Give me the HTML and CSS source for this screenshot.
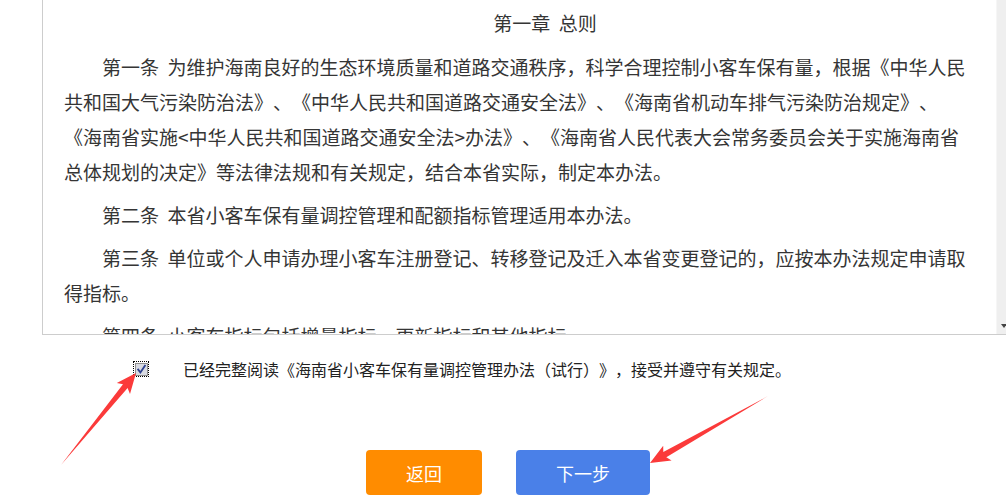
FILE: index.html
```html
<!DOCTYPE html>
<html lang="zh-CN">
<head>
<meta charset="utf-8">
<title>海南省小客车保有量调控管理办法</title>
<link rel="stylesheet" href="styles.css">
</head>
<body>
<div class="page">
  <div class="doc-box">
    <div class="doc-content">
      <p class="title">第一章&nbsp;&nbsp;总则</p>
      <p>第一条&nbsp;&nbsp;为维护海南良好的生态环境质量和道路交通秩序，科学合理控制小客车保有量，根据《中华人民共和国大气污染防治法》、《中华人民共和国道路交通安全法》、《海南省机动车排气污染防治规定》、《海南省实施&lt;中华人民共和国道路交通安全法&gt;办法》、《海南省人民代表大会常务委员会关于实施海南省总体规划的决定》等法律法规和有关规定，结合本省实际，制定本办法。</p>
      <p>第二条&nbsp;&nbsp;本省小客车保有量调控管理和配额指标管理适用本办法。</p>
      <p>第三条&nbsp;&nbsp;单位或个人申请办理小客车注册登记、转移登记及迁入本省变更登记的，应按本办法规定申请取得指标。</p>
      <p>第四条&nbsp;&nbsp;小客车指标包括增量指标、更新指标和其他指标。</p>
    </div>
    <div class="scrollbar"><span class="scroll-arrow"></span></div>
  </div>

  <div class="agree-row">
    <span class="check-focus">
      <span class="check-box">
        <svg width="11" height="11" viewBox="0 0 11 11"><path d="M2.2 5.6 L4.4 8.4 L8.9 1.8" fill="none" stroke="#2b3f8e" stroke-width="1.8" stroke-linecap="square"/></svg>
      </span>
    </span>
    <span class="agree-text">已经完整阅读《海南省小客车保有量调控管理办法（试行）》，接受并遵守有关规定。</span>
  </div>

  <div class="btn-row">
    <button class="btn btn-back">返回</button>
    <button class="btn btn-next">下一步</button>
  </div>

  <svg class="annot" width="1006" height="502" viewBox="0 0 1006 502">
    <polygon points="61,465 127.6,388.1 130,393.9 136,373 116.8,383.1 123,384.3" fill="#fb3a3a"/>
    <polygon points="768,396 666.3,457.2 671.6,460.5 650,463 663.2,445.7 663.3,452" fill="#fb3a3a"/>
  </svg>
</div>
</body>
</html>
```

FILE: styles.css
```css
html, body {
  margin: 0;
  padding: 0;
  background: #ffffff;
}

body {
  width: 1006px;
  height: 502px;
  overflow: hidden;
  font-family: "Noto Sans CJK SC", "Microsoft YaHei", sans-serif;
  color: #333333;
  text-spacing-trim: space-all;
  font-feature-settings: "chws" 0, "halt" 0, "palt" 0;
}

.page {
  position: relative;
  width: 1006px;
  height: 502px;
}

.doc-box {
  margin-left: 42px;
  height: 334px;
  border-left: 1px solid #cdcdcd;
  border-bottom: 1px solid #cdcdcd;
  display: flex;
  overflow: hidden;
}

.doc-content {
  flex: 1;
  padding: 5px 0 0 21px;
  overflow: hidden;
}

.doc-content p {
  width: 906px;
  margin: 0 0 8px 0;
  font-size: 19px;
  line-height: 35px;
  text-indent: 2em;
  color: #353535;
}

.doc-content p.title {
  text-align: center;
  text-indent: 0;
  padding-left: 56px;
  box-sizing: border-box;
  margin-bottom: 9px;
}

.scrollbar {
  width: 10px;
  background: #efefef;
  border-left: 1px solid #f6f6f6;
  display: flex;
  flex-direction: column;
  justify-content: flex-end;
  padding: 0 0 6px 4px;
  box-sizing: border-box;
}

.scroll-arrow {
  width: 0;
  height: 0;
  border-left: 3px solid transparent;
  border-right: 3px solid transparent;
  border-top: 4px solid #444;
}

.agree-row {
  display: flex;
  align-items: center;
  margin-top: 24px;
  padding-left: 133px;
  height: 20px;
}

.check-focus {
  display: flex;
  padding: 1px;
  outline: 1px dotted #000;
  outline-offset: -1px;
  width: 16px;
  height: 16px;
  box-sizing: border-box;
  align-items: center;
  justify-content: center;
}

.check-box {
  width: 13px;
  height: 13px;
  box-sizing: border-box;
  border: 1px solid #8e8e8e;
  background: #d9dbe2;
  display: flex;
  align-items: center;
  justify-content: center;
}

.agree-text {
  margin-left: 34px;
  font-size: 16px;
  line-height: 20px;
  color: #222222;
}

.btn-row {
  display: flex;
  justify-content: center;
  gap: 34px;
  padding-left: 10px;
  margin-top: 71px;
}

.btn {
  height: 45px;
  border: none;
  border-radius: 4px;
  color: #ffffff;
  font-family: "Noto Sans CJK SC", "Microsoft YaHei", sans-serif;
  font-size: 18px;
  padding: 0;
  cursor: pointer;
}

.btn-back {
  width: 116px;
  background: #ff8c00;
}

.btn-next {
  width: 134px;
  background: #4a80e8;
}

.annot {
  position: absolute;
  left: 0;
  top: 0;
  pointer-events: none;
}
```
